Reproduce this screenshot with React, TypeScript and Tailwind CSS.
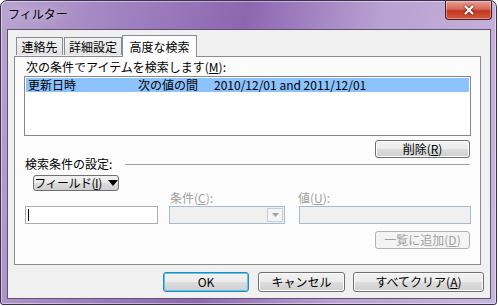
import { X } from "lucide-react"

const font = "font-['Noto_Sans_CJK_JP','Noto_Sans',sans-serif] text-[12px] leading-[14px]"

function Btn({ label, className, disabled, primary }: { label: React.ReactNode; className?: string; disabled?: boolean; primary?: boolean }) {
  if (disabled)
    return (
      <div className={`flex items-center justify-center whitespace-nowrap rounded-[3px] border border-[#adb2b5] bg-[#f4f4f4] text-[#a0a0a0] ${className ?? ""}`}>
        {label}
      </div>
    )
  return (
    <div
      className={`flex items-center justify-center whitespace-nowrap rounded-[3px] border ${primary ? "border-[#3c7fb1] shadow-[inset_0_0_0_1px_#48d0f9]" : "border-[#707070] shadow-[inset_0_0_0_1px_#fcfcfc]"} bg-[linear-gradient(#f2f2f2_0%,#ebebeb_50%,#dddddd_50%,#cfcfcf_100%)] text-black ${className ?? ""}`}
    >
      {label}
    </div>
  )
}

function Tab({ label, active, className }: { label: string; active?: boolean; className?: string }) {
  return (
    <div
      className={
        active
          ? `relative z-10 -mb-px flex h-[22px] items-center justify-center border border-b-0 border-[#898c95] bg-[#fcfcfc] ${className ?? ""}`
          : `mt-[2px] flex h-[18px] items-center justify-center border border-b-0 border-[#898c95] bg-[linear-gradient(#f2f2f2,#e3e3e3)] ${className ?? ""}`
      }
    >
      {label}
    </div>
  )
}

export default function App() {
  return (
    <div className={`h-[306px] w-[498px] bg-white ${font}`}>
      <div className="flex h-[305px] w-[497px] flex-col rounded-t-[7px] rounded-b-[3px] border border-[#3d3050] bg-[linear-gradient(100deg,#b9a4cf_0%,#a385c2_20%,#8d66b0_45%,#b9a1d3_70%,#c8b6dc_100%)] shadow-[inset_0_0_0_1px_rgba(255,255,255,0.45)]">
        {/* title bar */}
        <div className="flex h-[28px] shrink-0 items-start justify-between">
          <div className="pl-[7px] pt-[6px] text-[12px] text-black [text-shadow:0_0_8px_rgba(255,255,255,0.9)]">フィルター</div>
          <div className="mr-[4px] flex h-[19px] w-[47px] items-center justify-center rounded-b-[4px] border border-t-0 border-[#4a1e22] bg-[linear-gradient(#e8a093_0%,#d46a56_45%,#c2361f_55%,#d25a3e_100%)] shadow-[inset_0_0_0_1px_rgba(255,255,255,0.35)]">
            <X size={14} strokeWidth={3.6} className="text-white drop-shadow-[0_0_1px_#3a0a0a]" />
          </div>
        </div>

        {/* client area */}
        <div className="ml-[6px] h-[270px] w-[484px] border border-[#5f5270] bg-[#f0f0f0]">
          <div className="flex pl-[8px] pt-[5px]">
            <Tab label="連絡先" className="w-[47px]" />
            <Tab label="詳細設定" className="ml-[1px] w-[58px]" />
            <Tab label="高度な検索" active className="w-[75px]" />
          </div>

          <div className="ml-[6px] h-[209px] w-[467px] border border-[#898c95] bg-[#fcfcfc]">
            <div className="pl-[11px] pt-[3px]">次の条件でアイテムを検索します(<span className="underline">M</span>):</div>

            <div className="ml-[9px] mt-[2px] h-[60px] w-[447px] border border-[#828790] bg-white p-px">
              <div className="flex h-[14px] items-center bg-[#8cc3fc] whitespace-nowrap">
                <span className="w-[112px] pl-[2px]">更新日時</span>
                <span className="w-[76px]">次の値の間</span>
                <span>2010/12/01 and 2011/12/01</span>
              </div>
            </div>

            <div className="mt-[4px] flex justify-end pr-[10px]">
              <Btn label={<>削除(<span className="underline">R</span>)</>} className="h-[18px] w-[95px]" />
            </div>

            <div className="mt-[-1px] flex items-center pl-[10px] pr-[10px]">
              <span className="whitespace-nowrap">検索条件の設定:</span>
              <div className="ml-[13px] h-px flex-1 bg-[#a0a0a0]" />
            </div>

            <div className="ml-[18px] mt-[4px] flex h-[16px] w-[86px] items-center justify-center gap-[6px] whitespace-nowrap rounded-[3px] border border-[#707070] bg-[linear-gradient(#f2f2f2_0%,#ebebeb_50%,#dddddd_50%,#cfcfcf_100%)]">
              <span className="tracking-[-0.5px]">フィールド(<span className="underline">I</span>)</span>
              <svg width="10" height="6" viewBox="0 0 10 6" className="shrink-0"><path d="M0 0h10L5 6z" fill="#000" /></svg>
            </div>

            <div className="flex pl-[10px]">
              <div className="w-[144px]" />
              <div className="w-[129px] pl-[1px] text-[#a0a0a0]">条件(<span className="underline">C</span>):</div>
              <div className="text-[#a0a0a0]">値(<span className="underline">U</span>):</div>
            </div>

            <div className="mt-[1px] flex items-start pl-[10px]">
              <div className="flex h-[18px] w-[133px] items-center border border-[#abadb3] bg-white pl-[2px]">
                <div className="h-[12px] w-px bg-black" />
              </div>
              <div className="ml-[11px] flex h-[18px] w-[116px] items-center justify-end border border-[#a8bbd3] bg-[#f0f0f0] pr-px">
                <div className="flex h-[14px] w-[16px] items-center justify-center border border-[#c5cdd6] bg-[#f4f4f4]">
                  <svg width="7" height="4" viewBox="0 0 7 4"><path d="M0 0h7L3.5 4z" fill="#a0a0a0" /></svg>
                </div>
              </div>
              <div className="ml-[14px] h-[18px] w-[172px] border border-[#a8bbd3] bg-[#f0f0f0]" />
            </div>

            <div className="mt-[7px] flex justify-end pr-[10px]">
              <Btn disabled label={<>一覧に追加(<span className="underline">D</span>)</>} className="h-[18px] w-[95px]" />
            </div>
          </div>

          <div className="mt-[7px] flex justify-end pr-[6px]">
            <Btn primary label="OK" className="h-[20px] w-[86px]" />
            <Btn label="キャンセル" className="ml-[9px] h-[20px] w-[87px]" />
            <Btn label={<>すべてクリア(<span className="underline">A</span>)</>} className="ml-[8px] h-[20px] w-[131px]" />
          </div>
        </div>
      </div>
    </div>
  )
}
